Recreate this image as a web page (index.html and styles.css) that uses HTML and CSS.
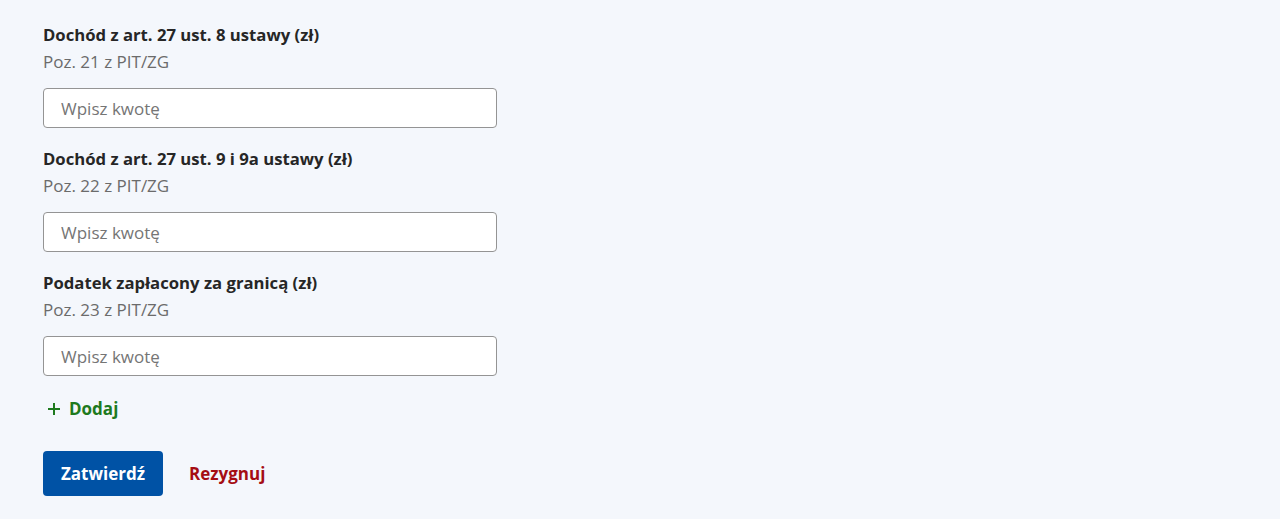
FILE: index.html
```html
<!DOCTYPE html>
<html lang="pl">
<head>
    <meta charset="UTF-8">
    <meta name="viewport" content="width=device-width, initial-scale=1.0">
    <title>PIT/ZG</title>
    <link rel="stylesheet" href="styles.css">
</head>
<body>
    <div class="form">
        <div class="field">
            <label for="poz21" class="field-label">Dochód z art. 27 ust. 8 ustawy (zł)</label>
            <div class="field-hint">Poz. 21 z PIT/ZG</div>
            <input id="poz21" type="text" placeholder="Wpisz kwotę">
        </div>
        <div class="field">
            <label for="poz22" class="field-label">Dochód z art. 27 ust. 9 i 9a ustawy (zł)</label>
            <div class="field-hint">Poz. 22 z PIT/ZG</div>
            <input id="poz22" type="text" placeholder="Wpisz kwotę">
        </div>
        <div class="field">
            <label for="poz23" class="field-label">Podatek zapłacony za granicą (zł)</label>
            <div class="field-hint">Poz. 23 z PIT/ZG</div>
            <input id="poz23" type="text" placeholder="Wpisz kwotę">
        </div>

        <button class="add-link" type="button">
            <svg width="14" height="14" viewBox="0 0 14 14" aria-hidden="true">
                <path d="M7 1v12M1 7h12" stroke="currentColor" stroke-width="2" fill="none"/>
            </svg>
            Dodaj
        </button>

        <div class="actions">
            <button class="btn-primary" type="button">Zatwierdź</button>
            <button class="btn-cancel" type="button">Rezygnuj</button>
        </div>
    </div>
</body>
</html>
```

FILE: styles.css
```css
body {
    margin: 0;
    background-color: #f4f7fc;
    font-family: "Open Sans", "Noto Sans", sans-serif;
    color: #1b1b1b;
}
.form {
    padding: 23px 43px 0;
    width: 454px;
    display: flex;
    flex-direction: column;
}
.field {
    display: flex;
    flex-direction: column;
    margin-bottom: 19px;
}
.field-label {
    font-size: 16.7px;
    font-weight: 700;
    line-height: 24px;
    color: #262626;
}
.field-hint {
    font-size: 17px;
    line-height: 24px;
    margin-top: 3px;
    color: #6b6b6b;
}
.field input {
    margin-top: 14px;
    height: 40px;
    box-sizing: border-box;
    border: 1px solid #949494;
    border-radius: 4px;
    background: #fff;
    padding: 0 17px;
    font-family: inherit;
    font-size: 17px;
    color: #262626;
}
.field input::placeholder {
    color: #757575;
}
.add-link {
    display: flex;
    align-items: center;
    gap: 8px;
    align-self: flex-start;
    margin-top: 2px;
    padding: 0 0 0 4px;
    border: none;
    background: none;
    font-family: inherit;
    font-size: 17px;
    font-weight: 700;
    line-height: 24px;
    color: #1e7a1e;
}
.actions {
    display: flex;
    align-items: center;
    gap: 26px;
    margin-top: 30px;
}
.btn-primary {
    width: 120px;
    height: 45px;
    border: none;
    border-radius: 4px;
    background-color: #0052a5;
    color: #fff;
    font-family: inherit;
    font-size: 17px;
    font-weight: 700;
}
.btn-cancel {
    border: none;
    background: none;
    padding: 0;
    font-family: inherit;
    font-size: 17px;
    font-weight: 700;
    color: #a50d14;
}
```
